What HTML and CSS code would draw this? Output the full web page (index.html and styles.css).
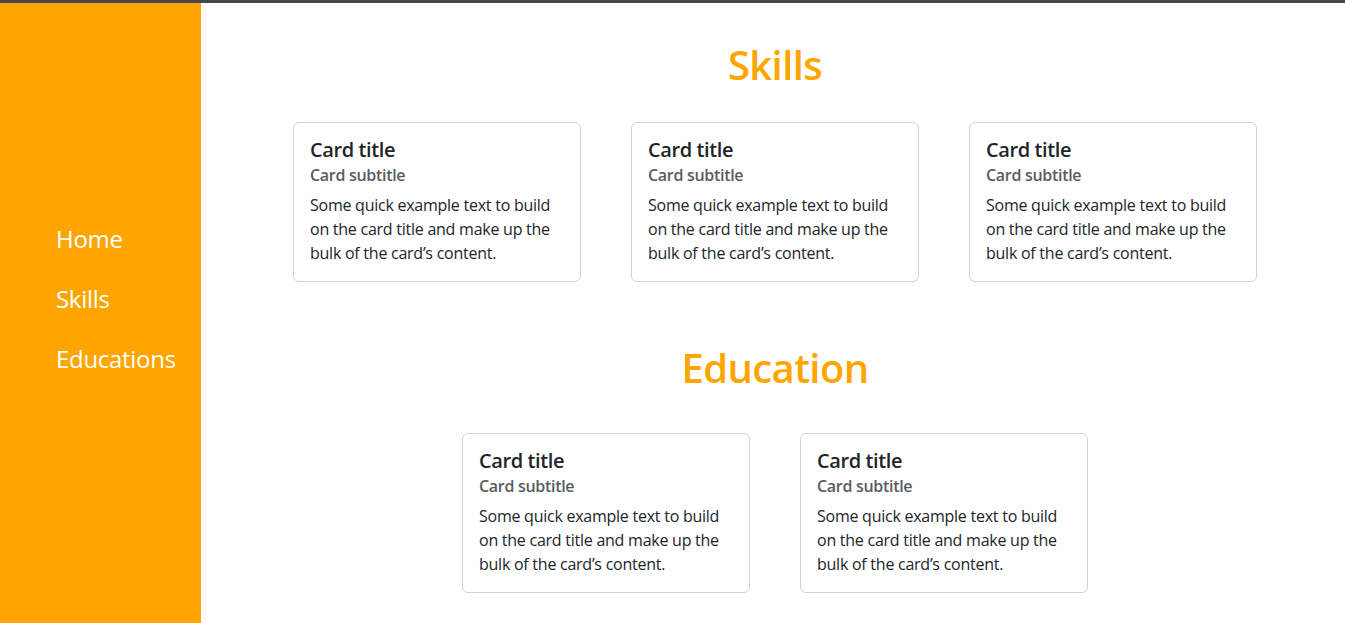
FILE: index.html
```html
<!DOCTYPE html>
<html lang="en">
<head>
<meta charset="utf-8">
<title>Portfolio</title>
<link rel="stylesheet" href="styles.css">
</head>
<body>
<div class="topbar"></div>
<div class="layout">
  <nav class="sidebar">
    <a class="nav-link" href="#home">Home</a>
    <a class="nav-link" href="#skills">Skills</a>
    <a class="nav-link" href="#educations">Educations</a>
  </nav>
  <main class="main">
    <section class="section" id="skills">
      <h1 class="section-title">Skills</h1>
      <div class="card-row">
        <div class="card">
          <h5 class="card-title">Card title</h5>
          <h6 class="card-subtitle">Card subtitle</h6>
          <p class="card-text">Some quick example text to build on the card title and make up the bulk of the card’s content.</p>
        </div>
        <div class="card">
          <h5 class="card-title">Card title</h5>
          <h6 class="card-subtitle">Card subtitle</h6>
          <p class="card-text">Some quick example text to build on the card title and make up the bulk of the card’s content.</p>
        </div>
        <div class="card">
          <h5 class="card-title">Card title</h5>
          <h6 class="card-subtitle">Card subtitle</h6>
          <p class="card-text">Some quick example text to build on the card title and make up the bulk of the card’s content.</p>
        </div>
      </div>
    </section>
    <section class="section" id="educations">
      <h1 class="section-title">Education</h1>
      <div class="card-row">
        <div class="card">
          <h5 class="card-title">Card title</h5>
          <h6 class="card-subtitle">Card subtitle</h6>
          <p class="card-text">Some quick example text to build on the card title and make up the bulk of the card’s content.</p>
        </div>
        <div class="card">
          <h5 class="card-title">Card title</h5>
          <h6 class="card-subtitle">Card subtitle</h6>
          <p class="card-text">Some quick example text to build on the card title and make up the bulk of the card’s content.</p>
        </div>
      </div>
    </section>
  </main>
</div>
</body>
</html>
```

FILE: styles.css
```css
* { box-sizing: border-box; }
html, body { margin: 0; padding: 0; }
body {
  font-family: "Open Sans", "Noto Sans", "Liberation Sans", sans-serif;
  color: #212529;
  background: #fff;
  height: 623px;
  overflow: hidden;
}
.topbar {
  height: 3px;
  background: #45464f;
}
.layout {
  display: flex;
  height: 620px;
}
.sidebar {
  width: 201px;
  flex: 0 0 201px;
  background: #ffa500;
  display: flex;
  flex-direction: column;
  justify-content: center;
  padding: 0 0 28px 56px;
  gap: 24px;
}
.nav-link {
  color: #fff;
  text-decoration: none;
  font-size: 24px;
  line-height: 36px;
  letter-spacing: -0.3px;
}
.main {
  flex: 1;
  padding-top: 38px;
  padding-left: 4px;
  display: flex;
  flex-direction: column;
  align-items: center;
  gap: 62px;
}
.section {
  display: flex;
  flex-direction: column;
  align-items: center;
}
.section-title {
  margin: 0 0 33px;
  font-size: 40px;
  line-height: 48px;
  font-weight: 600;
  color: #ffa500;
  letter-spacing: -0.6px;
}
#educations .section-title { margin-bottom: 41px; }
.card-row {
  display: flex;
  gap: 50px;
  justify-content: center;
}
.card {
  width: 288px;
  height: 160px;
  border: 1px solid rgba(0,0,0,0.175);
  border-radius: 6px;
  padding: 15px 16px 16px;
}
.card-title {
  margin: 0 0 8px;
  font-size: 20px;
  line-height: 24px;
  font-weight: 600;
  color: #212529;
  letter-spacing: -0.4px;
}
.card-subtitle {
  margin: -4px 0 8px;
  font-size: 16px;
  line-height: 19px;
  font-weight: 600;
  color: #595c5f;
  letter-spacing: -0.3px;
}
.card-text {
  margin: 0;
  font-size: 16px;
  line-height: 24px;
  letter-spacing: -0.25px;
}
```
